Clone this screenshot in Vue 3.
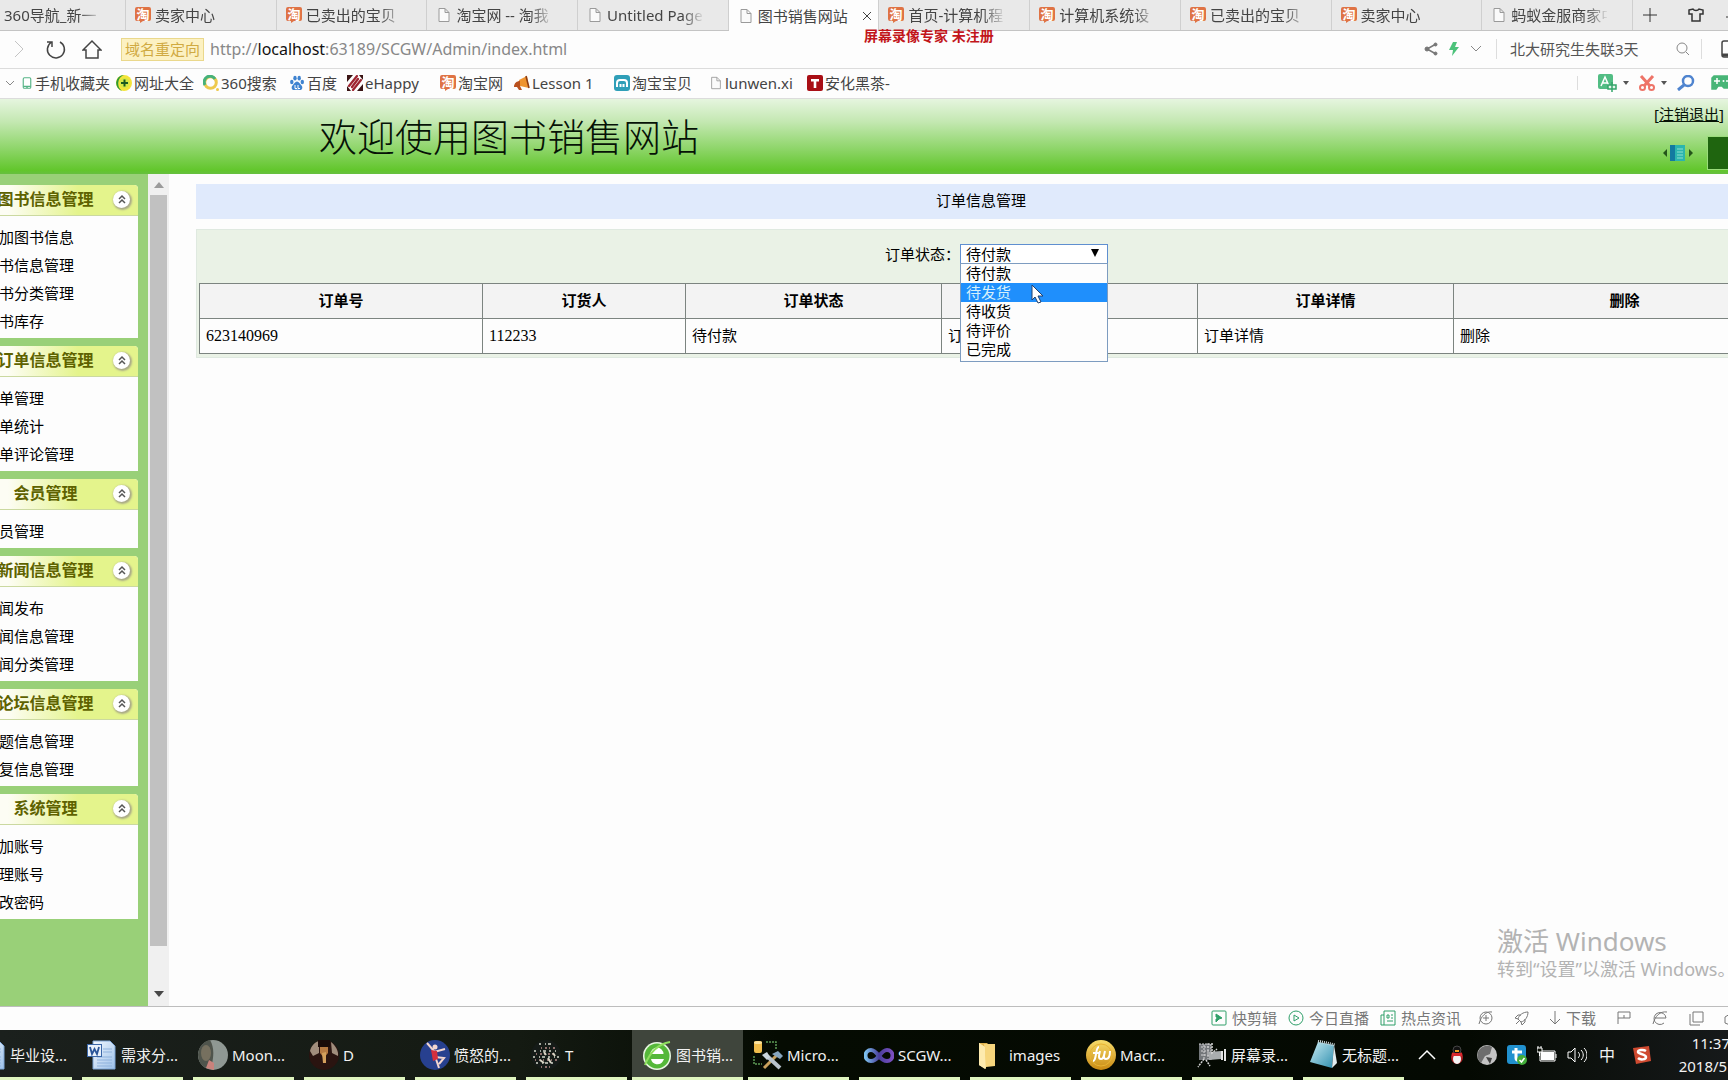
<script setup>
import { ref } from 'vue'

const tabs = [
  { title: '360导航_新一' },
  { title: '卖家中心', icon: 'tao' },
  { title: '已卖出的宝贝', icon: 'tao' },
  { title: '淘宝网 -- 淘我', icon: 'page' },
  { title: 'Untitled Page', icon: 'page' },
  { title: '图书销售网站', icon: 'page', active: true },
  { title: '首页-计算机程', icon: 'tao' },
  { title: '计算机系统设', icon: 'tao' },
  { title: '已卖出的宝贝', icon: 'tao' },
  { title: '卖家中心', icon: 'tao' },
  { title: '蚂蚁金服商家中', icon: 'page' },
]

const bookmarks = [
  { title: '手机收藏夹', icon: 'phone' },
  { title: '网址大全', icon: 'plus360' },
  { title: '360搜索', icon: 'ring' },
  { title: '百度', icon: 'paw' },
  { title: 'eHappy', icon: 'ehappy' },
  { title: '淘宝网', icon: 'tao' },
  { title: 'Lesson 1', icon: 'horn' },
  { title: '淘宝宝贝', icon: 'shell' },
  { title: 'lunwen.xi', icon: 'page' },
  { title: '安化黑茶-', icon: 'tea' },
]

const menu = [
  { title: '图书信息管理', items: ['添加图书信息', '图书信息管理', '图书分类管理', '图书库存'] },
  { title: '订单信息管理', items: ['订单管理', '订单统计', '订单评论管理'] },
  { title: '会员管理', items: ['会员管理'] },
  { title: '新闻信息管理', items: ['新闻发布', '新闻信息管理', '新闻分类管理'] },
  { title: '论坛信息管理', items: ['主题信息管理', '回复信息管理'] },
  { title: '系统管理', items: ['添加账号', '管理账号', '修改密码'] },
]

const states = ['待付款', '待发货', '待收货', '待评价', '已完成']
const state = ref('待付款')
const hovered = ref('待发货')

const tasks = [
  { title: '毕业设...', icon: 'word' },
  { title: '需求分...', icon: 'word' },
  { title: 'Moon...', icon: 'moon' },
  { title: 'D', icon: 'dark' },
  { title: '愤怒的...', icon: 'dancer' },
  { title: 'T', icon: 'noise' },
  { title: '图书销...', icon: 'browser', active: true },
  { title: 'Micro...', icon: 'tools' },
  { title: 'SCGW...', icon: 'vs' },
  { title: 'images', icon: 'folder' },
  { title: 'Macr...', icon: 'macro' },
  { title: '屏幕录...', icon: 'camera' },
  { title: '无标题...', icon: 'notepad' },
]
</script>

<template>
  <div class="screen">
    <svg class="sprite" aria-hidden="true">
      <defs>
        <linearGradient id="gold" x1="0" y1="0" x2="0" y2="1">
          <stop offset="0" stop-color="#f7dc6a" /><stop offset="1" stop-color="#c98a12" />
        </linearGradient>
        <linearGradient id="doc" x1="0" y1="0" x2="1" y2="1">
          <stop offset="0" stop-color="#f4f9ff" /><stop offset="1" stop-color="#9cc0e8" />
        </linearGradient>
        <linearGradient id="note" x1="0" y1="0" x2="1" y2="1">
          <stop offset="0" stop-color="#c9ecf4" /><stop offset="1" stop-color="#2f8fae" />
        </linearGradient>
        <linearGradient id="inf" x1="0" y1="0" x2="1" y2="0">
          <stop offset="0" stop-color="#7cc0ee" /><stop offset="0.5" stop-color="#4a3f9c" /><stop offset="1" stop-color="#7a4fc0" />
        </linearGradient>
        <symbol id="tao" viewBox="0 0 16 16">
          <path d="M2 0h12a2 2 0 0 1 2 2v10a2 2 0 0 1-2 2H8l-3 2v-2H2a2 2 0 0 1-2-2V2a2 2 0 0 1 2-2z" fill="#df7345" />
          <text x="8" y="11.500" font-size="13" font-weight="bold" fill="#fff" text-anchor="middle">淘</text>
        </symbol>
        <symbol id="page" viewBox="0 0 16 16">
          <path d="M3 1.500h6l4 4v9H3zM9 1.500v4h4" fill="#fafafa" stroke="#9a9a9a" />
        </symbol>
        <symbol id="phone" viewBox="0 0 16 16">
          <rect x="3" y="1" width="10" height="14" rx="1.500" fill="#fff" stroke="#55b486" stroke-width="1.500" /><path d="M3 12.500h10M7 14h2" stroke="#55b486" stroke-width="1.500" />
        </symbol>
        <symbol id="plus360" viewBox="0 0 16 16">
          <circle cx="8" cy="8" r="8" fill="#f4e43a" /><path d="M8 0A8 8 0 0 0 6 15.700A9 9 0 0 1 8 0z" fill="#2f9a35" /><circle cx="8.500" cy="8" r="5" fill="#d6e844" /><path d="M8.500 4.500v7M5 8h7" stroke="#1a5a20" stroke-width="2" />
        </symbol>
        <symbol id="ring" viewBox="0 0 16 16">
          <circle cx="7.500" cy="7.500" r="5.800" fill="none" stroke="#eec94c" stroke-width="3" /><path d="M2 10A5.800 5.800 0 0 1 12 4" fill="none" stroke="#46b27a" stroke-width="3" /><circle cx="14.500" cy="14.500" r="1.500" fill="#eec94c" />
        </symbol>
        <symbol id="paw" viewBox="0 0 16 16" fill="#3f83d0">
          <ellipse cx="2.800" cy="7" rx="1.700" ry="2.200" /><ellipse cx="6" cy="3.200" rx="1.700" ry="2.400" /><ellipse cx="10.200" cy="3.200" rx="1.700" ry="2.400" /><ellipse cx="13.300" cy="7" rx="1.700" ry="2.200" /><path d="M8 6.500c2 0 3 2.500 4.500 4s1 5-2 4.500c-2-.3-3-.3-5 0-3 .5-3.500-3-2-4.500S6 6.500 8 6.500z" /><path d="M6 10v3.500h2M9 10v3.500h2" stroke="#fff" fill="none" />
        </symbol>
        <symbol id="ehappy" viewBox="0 0 16 16">
          <path d="M0 0h6L0 7zM16 16h-6l6-7zM0 11v5h4zM16 5V0h-4z" fill="#3a1414" /><path d="M2 11L10 1M14 5L6 15M5 12l6-8" fill="none" stroke="#9e2430" stroke-width="2.200" stroke-linecap="round" />
        </symbol>
        <symbol id="horn" viewBox="0 0 16 16">
          <path d="M5 5l8-4 2 12-9-2z" fill="#ef9430" /><path d="M0 12c0-4 3-6 6-6v5l2 4H5l-2-3z" fill="#b9501d" /><path d="M12 1l3 12" stroke="#8d3c14" stroke-width="1.500" />
        </symbol>
        <symbol id="shell" viewBox="0 0 16 16">
          <rect width="16" height="16" rx="3" fill="#2f9fb8" /><path d="M3 12V8a3 3 0 0 1 3-3h4a3 3 0 0 1 3 3v4M6.500 12V9M9.500 12V9" fill="none" stroke="#fff" stroke-width="2" />
        </symbol>
        <symbol id="tea" viewBox="0 0 16 16">
          <rect width="16" height="16" rx="2" fill="#a90f16" /><path d="M4 4h8v2.500H9.300V13H6.700V6.500H4z" fill="#fff" />
        </symbol>
        <symbol id="word" viewBox="0 0 30 30">
          <path d="M6 1h17l5 5v23H6z" fill="url(#doc)" stroke="#7fa6d6" /><path d="M16 9h9M16 12h9M10 17h15M10 20h15M10 23h15M10 26h15" stroke="#8fb2dd" /><rect x="0.500" y="4.500" width="14" height="12" fill="#e9f1fb" stroke="#3b67a8" /><path d="M3 7l2 7 2.500-5L10 14l2-7" fill="none" stroke="#2a5599" stroke-width="1.800" />
        </symbol>
        <symbol id="moon" viewBox="0 0 30 30">
          <circle cx="15" cy="15" r="15" fill="#8f9893" /><path d="M0 15A15 15 0 0 1 12 0c4 7 4 14 2 24l-6 4A15 15 0 0 1 0 15z" fill="#4f544c" /><ellipse cx="8" cy="13" rx="5" ry="8" fill="#76705f" /><path d="M8 28l3-8 5 3v7z" fill="#c9827c" />
        </symbol>
        <symbol id="dark" viewBox="0 0 30 30">
          <circle cx="15" cy="15" r="15" fill="#2a1410" /><path d="M1 11C2 6 6 2 10 1v12l-6 3zM22 2c4 3 8 9 7 14l-6-3z" fill="#a08d7c" /><path d="M11 7h8v6l-4 5-4-5z" fill="#b67a42" /><path d="M9 0h12v7H9z" fill="#180a08" /><path d="M13 13l4-1v11h-3z" fill="#d3a05c" />
        </symbol>
        <symbol id="dancer" viewBox="0 0 30 30">
          <circle cx="15" cy="15" r="15" fill="#27408f" /><path d="M7 3l7 8 2 8 3 9M14 12l11-3M15 17l9 1-5 6" fill="none" stroke="#f2d5cf" stroke-width="2" /><circle cx="15" cy="7" r="2.500" fill="#f2d5cf" /><path d="M11 10l6 1 1 8-5 2z" fill="#d42f3d" />
        </symbol>
        <symbol id="noise" viewBox="0 0 30 30">
          <circle cx="15" cy="15" r="15" fill="#151b18" />
          <g fill="none" stroke-width="2"><path d="M8 4h14M3 11h24M2 17h26M5 23h20" stroke="#a5a9a0" stroke-dasharray="2 4 1 2 3 3" /><path d="M10 8h14M5 14h20M4 20h22M10 27h12" stroke="#8d6f6c" stroke-dasharray="1 3 2 2" /><path d="M9 20l4 3M17 18l3 5M13 12l2 3M22 13l2 3" stroke="#d8d4c4" /></g>
        </symbol>
        <symbol id="browser" viewBox="0 0 30 30">
          <circle cx="15" cy="16" r="14" fill="#e9f7e2" /><circle cx="15" cy="16" r="12.500" fill="#55b83a" /><path d="M22 19H9a6.500 6.500 0 0 0 12 2M8.500 14a6.500 6.500 0 0 1 13 0z" fill="#fff" /><path d="M12 17h7" stroke="#55b83a" stroke-width="3" /><path d="M3 25C8 12 16 4 28 2" fill="none" stroke="#8ede5e" stroke-width="2" />
        </symbol>
        <symbol id="tools" viewBox="0 0 30 30">
          <rect x="1" y="1" width="8" height="12" rx="2" fill="#f0bd4c" /><ellipse cx="5" cy="2.500" rx="4" ry="1.500" fill="#fbe3a0" /><path d="M13 2h10v8M1 16v8h8" fill="none" stroke="#5d9a55" stroke-width="1.500" stroke-dasharray="2 1" /><path d="M11 28l14-14" stroke="#c9a15c" stroke-width="3" /><path d="M14 16l13 12" stroke="#b9c4cc" stroke-width="4" /><path d="M19 14l6-3 5 5-3 3z" fill="#87a5bd" /><path d="M9 15l5-3 3 5-3 3z" fill="#cbd6de" />
        </symbol>
        <symbol id="vs" viewBox="0 0 30 30">
          <path d="M15 16c-3-4-5-6-8-6a5.500 5.500 0 0 0 0 11c3 0 5-1 8-5s5-6 8-6a5.500 5.500 0 0 1 0 11c-3 0-5-1-8-5z" fill="none" stroke="url(#inf)" stroke-width="4" />
        </symbol>
        <symbol id="folder" viewBox="0 0 30 30">
          <path d="M4 3h8l2 2h6v20H4z" fill="#e0b34f" /><path d="M4 3l7 5v21l-7-4z" fill="#fbe5a0" /><path d="M9 4h11v22l-9 1z" fill="#f6d57c" /><path d="M4 3l6 4v22l-6-4z" fill="#fdeaae" />
        </symbol>
        <symbol id="macro" viewBox="0 0 30 30">
          <circle cx="15" cy="15" r="15" fill="url(#gold)" /><circle cx="15" cy="15" r="11" fill="none" stroke="#e8b433" /><path d="M13 7c-4 0-2 14-6 14M7 13h6M14 11c-1 4-2 8 1 8s3-4 4-8c-1 4-2 8 1 8s4-4 4-8" fill="none" stroke="#fff" stroke-width="2" />
        </symbol>
        <symbol id="camera" viewBox="0 0 30 30">
          <rect x="2" y="4" width="12" height="16" fill="#73777a" /><path d="M2 4h12v16M4 7h8M4 11h8M4 15h8M7 5v14M11 3v16" fill="none" stroke="#d6d6d6" stroke-dasharray="2 1" /><path d="M12 12l12-1v8l-12 1z" fill="#a9adae" /><path d="M25 11v9M28 9v12" stroke="#e4e4e4" stroke-width="2" /><path d="M7 19l-6 8M9 20l4 6M15 3v10l5-4" fill="none" stroke="#d8d8d8" stroke-dasharray="2 1" stroke-width="1.500" />
        </symbol>
        <symbol id="notepad" viewBox="0 0 30 30">
          <path d="M10 2l16 3-2 23-22-6z" fill="url(#note)" /><path d="M26 5l3 18-5 5z" fill="#e3eef0" /><path d="M10 1l17 4" stroke="#d0dcdf" stroke-width="3" stroke-dasharray="1 1" />
        </symbol>
      </defs>
    </svg>

    <!-- browser tabs -->
    <nav class="tabs">
      <button v-for="(t, i) in tabs" :key="i" class="tab" :class="{ active: t.active }">
        <svg v-if="t.icon" class="i16"><use :href="'#' + t.icon" /></svg>
        <span class="tab-title">{{ t.title }}</span>
        <svg v-if="t.active" class="close" viewBox="0 0 10 10"><path d="M1 1l8 8M9 1l-8 8" /></svg>
      </button>
      <div class="tab-tools">
        <svg class="line" width="14" height="14" viewBox="0 0 14 14"><path d="M7 0v14M0 7h14" /></svg>
        <svg class="line shirt" width="16" height="14" viewBox="0 0 16 14"><path d="M1 2l4-1c1 2 5 2 6 0l4 1v4h-3v7H4V6H1z" /></svg>
        <svg class="line" width="14" height="14" viewBox="0 0 14 14"><path d="M0 9h14" /></svg>
      </div>
    </nav>

    <!-- address bar -->
    <div class="address">
      <svg class="line fwd" width="10" height="18" viewBox="0 0 10 18"><path d="M1 1l8 8-8 8" /></svg>
      <svg class="line dark" width="20" height="20" viewBox="0 0 20 20"><path d="M5 3.500a8.500 8.500 0 1 0 9-.5M1 3h5v5" /></svg>
      <svg class="line dark home" width="20" height="20" viewBox="0 0 20 20"><path d="M1 11l9-9 9 9h-3v8H4v-8z" /></svg>
      <span class="redirect">域名重定向</span>
      <span class="url">http://<b>localhost</b>:63189/SCGW/Admin/index.html</span>
      <div class="address-right">
        <svg width="14" height="14" viewBox="0 0 14 14" fill="#777" stroke="#777"><path d="M12 2L3 7l9 5" fill="none" stroke-width="1.500" /><circle cx="3" cy="7" r="2" /><circle cx="11.500" cy="2.500" r="1.500" /><circle cx="11.500" cy="11.500" r="1.500" /></svg>
        <svg width="10" height="14" viewBox="0 0 10 14"><path d="M4 0h4L6 5h4L3 14l1-6H0z" fill="#4cc27a" /></svg>
        <svg class="line grey" width="12" height="8" viewBox="0 0 12 8"><path d="M1 1l5 5 5-5" /></svg>
        <label class="search"><input value="北大研究生失联3天" aria-label="搜索"></label>
        <svg class="line grey" width="14" height="14" viewBox="0 0 14 14"><circle cx="6" cy="6" r="5" /><path d="M10 10l3 3" /></svg>
        <i class="bar"></i>
        <svg class="line dark mobile" width="7" height="18" viewBox="0 0 7 18"><rect x="1" y="1" width="14" height="16" rx="2" /><path d="M1 15h9" stroke-width="3" /></svg>
      </div>
    </div>

    <!-- bookmarks -->
    <nav class="bookmarks">
      <svg class="line grey" width="10" height="6" viewBox="0 0 10 6"><path d="M1 1l4 4 4-4" /></svg>
      <a v-for="b in bookmarks" :key="b.title" href="#"><svg class="i16" :class="b.icon"><use :href="'#' + b.icon" /></svg>{{ b.title }}</a>
      <div class="tools">
        <i class="bar"></i>
        <svg width="19" height="18" viewBox="0 0 19 18"><rect width="15" height="15" rx="2" fill="#52bd84" /><path d="M3 12L7 3l4 9M5 9h5" stroke="#fff" fill="none" stroke-width="1.500" /><path d="M10 11h8v4h-8zM14 8v10" stroke="#35a56b" stroke-width="1.500" fill="#e5f7ec" /></svg>
        <svg class="caret" width="6" height="4" viewBox="0 0 6 4"><path d="M0 0h6L3 4z" fill="#555" /></svg>
        <svg width="16" height="16" viewBox="0 0 16 16" fill="none" stroke="#ee7468" stroke-width="2"><path d="M2 1l9 10M14 1L5 11" stroke-width="3" /><circle cx="3.500" cy="12.500" r="2.500" /><circle cx="12.500" cy="12.500" r="2.500" /></svg>
        <svg class="caret" width="6" height="4" viewBox="0 0 6 4"><path d="M0 0h6L3 4z" fill="#555" /></svg>
        <svg width="18" height="16" viewBox="0 0 18 16" fill="none" stroke="#4f84cf"><circle cx="11" cy="6" r="5" stroke-width="2.500" /><path d="M7 10l-6 5" stroke-width="3" /></svg>
        <svg class="pad" width="17" height="16" viewBox="0 0 17 16"><path d="M3 1h16v12h-6l-2-2H7l-2 3H1V3z" fill="#48b577" stroke="#48b577" stroke-width="1.500" /><path d="M6 3v6M3 6h6" stroke="#fff" stroke-width="1.500" /><circle cx="12.500" cy="6" r="1" fill="#fff" /><circle cx="16" cy="6" r="1" fill="#fff" /></svg>
      </div>
    </nav>

    <header class="banner">
      <h1>欢迎使用图书销售网站</h1>
      <div class="banner-side">
        <span class="logout">[<a href="#">注销退出</a>]</span>
        <div class="banner-row">
          <svg width="30" height="16" viewBox="0 0 30 16"><path d="M4 4v8L0 8zM26 4v8l4-4z" fill="#24551a" /><path d="M7 0h15v16H7z" fill="#2bb5ae" /><path d="M7 0h5v16H7z" fill="#137aa0" /><path d="M14 4h6M14 7h6M14 10h6M14 13h6" stroke="#8fe0ce" /></svg>
          <i class="block"></i>
        </div>
      </div>
    </header>

    <div class="workspace">
      <aside class="sidebar">
        <section v-for="m in menu" :key="m.title" class="group">
          <div class="group-head">
            <h2>{{ m.title }}</h2>
            <button class="fold" aria-label="收起"><svg width="8" height="10" viewBox="0 0 8 10"><path d="M1 5l3-3 3 3M1 9l3-3 3 3" /></svg></button>
          </div>
          <ul><li v-for="it in m.items" :key="it"><a href="#">{{ it }}</a></li></ul>
        </section>
      </aside>
      <div class="scroll">
        <svg width="10" height="6" viewBox="0 0 10 6"><path d="M5 0l5 6H0z" fill="#9b9b9b" /></svg>
        <div class="track"><div class="thumb"></div></div>
        <svg width="10" height="6" viewBox="0 0 10 6"><path d="M5 6l5-6H0z" fill="#484848" /></svg>
      </div>

      <main class="content">
        <div class="sheet">
          <h3>订单信息管理</h3>
          <div class="panel">
            <div class="filter">
              <label for="state">订单状态：</label>
              <div class="picker">
                <select id="state" v-model="state"><option v-for="s in states" :key="s">{{ s }}</option></select>
                <svg class="arrow" width="8" height="8" viewBox="0 0 8 8"><path d="M0 0h8L4 8z" /></svg>
                <ul class="drop">
                  <li v-for="s in states" :key="s" :class="{ on: s === hovered }" @mouseenter="hovered = s">{{ s }}</li>
                </ul>
                <svg class="pointer" width="13" height="20" viewBox="0 0 13 20"><path d="M1 1v15l3-3 3 6 3-1-3-6h5z" fill="#fff" stroke="#24406a" /></svg>
              </div>
            </div>
            <table>
              <colgroup><col class="c-no"><col class="c-user"><col class="c-std"><col class="c-std"><col class="c-std"><col></colgroup>
              <thead><tr><th>订单号</th><th>订货人</th><th>订单状态</th><th></th><th>订单详情</th><th>删除</th></tr></thead>
              <tbody><tr><td>623140969</td><td>112233</td><td>待付款</td><td>订</td><td>订单详情</td><td>删除</td></tr></tbody>
            </table>
          </div>
        </div>
        <div class="activate"><strong>激活 Windows</strong><span>转到“设置”以激活 Windows。</span></div>
      </main>
    </div>

    <!-- browser status bar -->
    <div class="status">
      <a href="#"><svg width="16" height="16" viewBox="0 0 16 16"><rect x="1" y="1" width="14" height="14" rx="1" /><path d="M5 4l6 4-3 1-3 3V9l2-1-2-1z" fill="#2f9f69" /></svg>快剪辑</a>
      <a href="#"><svg width="16" height="16" viewBox="0 0 16 16"><circle cx="8" cy="8" r="7" /><path d="M6 5l5 3-5 3z" /></svg>今日直播</a>
      <a href="#"><svg width="16" height="16" viewBox="0 0 16 16"><path d="M4 1h11v14H1V5h3zM4 5v10M7 5h2v3H7zM11 5h2M11 8h2M7 11h6" /></svg>热点资讯</a>
      <div class="mini">
        <svg viewBox="0 0 16 16"><circle cx="8" cy="8" r="6" /><path d="M1 14C3 6 8 1 14 2M8 5v6M5 8h6" /></svg>
        <svg viewBox="0 0 16 16"><path d="M4 9c1-4 5-7 10-7 0 5-3 9-7 10zM4 9L1 8l3-3h3M7 12l1 3 3-3V9M2 14l3-3" /></svg>
        <a href="#" class="dl"><svg viewBox="0 0 16 16"><path d="M8 1v13M3 9l5 5 5-5" /></svg>下载</a>
        <svg viewBox="0 0 16 16"><path d="M2 14V2h12v6H8V5M2 8h6" /></svg>
        <svg viewBox="0 0 16 16"><path d="M3 8h11a6 6 0 1 0-2 5M1 14C3 6 8 1 15 2" /></svg>
        <svg viewBox="0 0 16 16"><path d="M5 2h10v10H5zM2 4v11h10" /></svg>
        <svg viewBox="0 0 16 16"><path d="M6 4L1 7v6l5 2" /></svg>
      </div>
    </div>

    <!-- taskbar -->
    <footer class="taskbar">
      <div class="tasks">
        <button v-for="(t, i) in tasks" :key="i" class="task" :class="{ active: t.active }">
          <svg class="i30"><use :href="'#' + t.icon" /></svg><span>{{ t.title }}</span>
        </button>
      </div>
      <div class="tray">
        <svg viewBox="0 0 20 20"><path d="M2 14l8-8 8 8" fill="none" stroke="#fff" stroke-width="1.500" /></svg>
        <svg viewBox="0 0 20 20"><ellipse cx="10" cy="12" rx="6" ry="7" fill="#b02024" /><ellipse cx="10" cy="14" rx="4" ry="5" fill="#f4f4f4" /><circle cx="10" cy="5" r="4" fill="#111" stroke="#444" /><path d="M5 8h10v3H5z" fill="#d9282e" /><path d="M8 6h4" stroke="#f0a020" stroke-width="2" /></svg>
        <svg viewBox="0 0 20 20"><circle cx="10" cy="10" r="10" fill="#c4c4c4" /><path d="M2 5a10 10 0 0 1 13-3l-2 7-5 2-4 7A10 10 0 0 1 2 5z" fill="#6d6d6d" /><path d="M9 12l6 1-2 6z" fill="#444" /></svg>
        <svg viewBox="0 0 20 20"><rect width="19" height="19" rx="3" fill="#2191cf" /><path d="M9 3v10c0 3 5 3 6 1M5 7h10" fill="none" stroke="#fff" stroke-width="3" /><circle cx="15" cy="15" r="5" fill="#43ad39" /><path d="M12.500 15l2 2 3-4" fill="none" stroke="#fff" stroke-width="1.500" /></svg>
        <svg viewBox="0 0 20 20"><path d="M4 7h13v8H4z" fill="#fff" /><path d="M3 6h15v10H3zM19 9v4" fill="none" stroke="#fff" /><path d="M0 3h5v4H0zM1 1v2M4 1v2M2.500 7v4" fill="#0a0f06" stroke="#fff" /></svg>
        <svg viewBox="0 0 20 20"><path d="M1 7h3l4-4v14l-4-4H1zM11 7c2 2 2 4 0 6M14 5c3 3 3 7 0 10M17 3c4 4 4 10 0 14" fill="none" stroke="#fff" /></svg>
        <span class="ime">中</span>
        <svg viewBox="0 0 20 20"><path d="M1 3l16-2 2 15-15 3z" fill="#cf4a30" /><path d="M14 6c-3-2-8-1-8 1s8 2 8 5-6 3-8 1" fill="none" stroke="#fff" stroke-width="2.500" /></svg>
      </div>
      <div class="clock"><time class="time">11:37</time><time>2018/5</time></div>
    </footer>

    <div class="recorder">屏幕录像专家  未注册</div>
  </div>
</template>

<style>
body { margin: 0; overflow: hidden; }
</style>

<style scoped>
.screen { position: relative; display: flex; flex-direction: column; height: 100vh; overflow: hidden; background: #fdfdfd; color: #444; font: 15px/20px "Noto Sans", "Noto Sans CJK SC", sans-serif; white-space: nowrap; }
.sprite { position: absolute; width: 0; height: 0; }
button { border: 0; padding: 0; background: none; font: inherit; color: inherit; }
a { color: inherit; text-decoration: none; }
ul { margin: 0; padding: 0; list-style: none; }
svg { flex: none; display: block; }
.i16 { width: 16px; height: 16px; }
.i30 { width: 30px; height: 30px; }
.line { fill: none; stroke: #333; }
.line.dark { stroke: #444; stroke-width: 1.5; }
.line.grey { stroke: #888; }
.bar { width: 1px; height: 20px; background: #ddd; }

.tabs { display: grid; grid-template-columns: 126px repeat(10, 1fr) 95px; height: 30px; background: #e9e9e9; border-bottom: 1px solid #c4c4c4; }
.tab { display: flex; align-items: center; gap: 4px; min-width: 0; padding: 0 6px 0 9px; border-right: 1px solid #cfcfcf; }
.tab:first-child { padding-left: 4px; }
.tab.active { background: #fdfdfd; margin-bottom: -1px; }
.tab-title { width: 96px; overflow: hidden; text-align: left; mask-image: linear-gradient(90deg, #000 75px, transparent 98px); }
.tab.active .tab-title { mask-image: none; }
.close { width: 10px; height: 10px; margin-left: 4px; stroke: #444; }
.tab-tools { display: flex; align-items: center; overflow: hidden; padding-left: 10px; }
.shirt { margin: 0 22px 0 31px; stroke-width: 1.5; }

.address { display: flex; align-items: center; height: 36px; border-bottom: 1px solid #dcdcdc; padding: 0 0 1px 14px; }
.fwd { margin-right: 22px; stroke: #c4c4c4; }
.home { margin-left: 16px; }
.redirect { margin: 0 6px 0 19px; padding: 0 3px; border: 1px solid #ead88c; background: #fcf1c2; color: #d0aa42; line-height: 21px; }
.url { font-size: 16px; color: #888; }
.url b { font-weight: 400; color: #111; }
.address-right { display: flex; align-items: center; margin-left: auto; gap: 11px; }
.search { display: flex; margin-left: 3px; border-left: 1px solid #ddd; padding-left: 13px; }
.search input { width: 155px; padding: 0; border: 0; background: none; font: inherit; color: #555; outline: 0; }
.mobile { margin-left: 8px; }

.bookmarks { display: grid; grid-template-columns: 16px 95px 87px 86px 58px 93px 74px 100px 95px 98px 100px 1fr; align-items: center; height: 27px; padding: 0 0 2px 5px; border-bottom: 1px solid #dcdcdc; }
.bookmarks a { display: flex; align-items: center; gap: 2px; }
.bookmarks .phone { width: 12px; }
.bookmarks .page { width: 14px; }
.tools { display: flex; align-items: center; justify-content: flex-end; }
.tools .bar { height: 14px; margin-right: 20px; }
.caret { margin: 0 10px 0 6px; }
.pad { margin-left: 16px; }

.banner { display: flex; justify-content: space-between; height: 75px; padding-left: 319px; background: linear-gradient(#e6f5df, #c4e8b2 30%, #90d66c 65%, #62c62c 95%, #66bf40); color: #061206; }
.banner h1 { margin: 0; font-weight: 300; font-size: 38px; line-height: 74px; }
.banner-side { display: flex; flex-direction: column; align-items: flex-end; justify-content: space-between; padding: 5px 0 4px; }
.logout { padding-right: 4px; }
.logout a { text-decoration: underline; }
.banner-row { display: flex; align-items: center; gap: 14px; }
.block { width: 20px; height: 32px; border: 1px solid #9bdc7c; border-right: 0; background: #1f650f; }

.workspace { flex: 1; display: flex; min-height: 0; color: #000; }
.sidebar { width: 148px; overflow: hidden; padding-top: 11px; box-sizing: border-box; background: #99d078; }
.group { width: 160px; margin: 0 0 8px -22px; background: #fdfdfd; border-radius: 0 4px 0 0; overflow: hidden; }
.group-head { display: flex; align-items: center; box-sizing: border-box; height: 31px; padding-bottom: 2px; border-bottom: 1px solid #cbd9a0; background: linear-gradient(90deg, #fdfdf4 30px, #e4f48c 100px); }
.group-head h2 { flex: 1; margin: 0; font-size: 16px; text-align: center; color: #5e6200; }
.fold { display: flex; align-items: center; justify-content: center; width: 17px; height: 17px; margin-right: 8px; border-radius: 50%; background: #fff; box-shadow: 1px 1px 2px 1px #a8a888; }
.fold svg { fill: none; stroke: #555; stroke-width: 1.5; }
.group ul { padding: 7px 0 3px 6px; }
.group li { line-height: 28px; }
.scroll { width: 21px; display: flex; flex-direction: column; align-items: center; box-sizing: border-box; padding: 8px 0 9px; background: #f0f0f0; }
.track { flex: 1; width: 17px; padding: 7px 0 45px; display: flex; }
.thumb { flex: 1; background: #c1c1c1; }

.content { position: relative; flex: 1; min-width: 0; overflow: hidden; padding: 10px 0 0 27px; }
.sheet { margin-right: -71px; }
.sheet h3 { margin: 0 0 10px; padding: 0 33px 2px 0; background: #e0eafc; font-weight: 400; font-size: 15px; line-height: 33px; text-align: center; }
.panel { padding: 0 2px 3px; border: 1px solid #dfe9e0; background: #eaf2e6; }
.filter { display: flex; justify-content: center; align-items: center; box-sizing: border-box; height: 53px; padding: 0 2px 6px 0; }
.picker { position: relative; width: 148px; }
.picker select { display: block; width: 100%; height: 20px; padding: 0 5px; border: 1px solid #5f8fd0; background: #fff; appearance: none; font: inherit; line-height: 18px; color: #000; border-radius: 0; outline: 0; }
.arrow { position: absolute; right: 9px; top: 5px; }
.drop { position: absolute; left: 0; right: 0; top: 19px; z-index: 2; border: 1px solid #7d9cc0; background: #fdfdfd; padding-bottom: 2px; }
.drop li { padding-left: 5px; line-height: 19px; }
.drop .on { background: #1f8ffc; color: #d6f0fb; }
.pointer { position: absolute; left: 71px; top: 40px; z-index: 3; }
table { width: 100%; table-layout: fixed; border-collapse: collapse; background: #fdfdfd; }
.c-no { width: 283px; }
.c-user { width: 203px; }
.c-std { width: 256px; }
th, td { box-sizing: border-box; height: 35px; padding: 0 6px; border: 1px solid #7c8480; }
th { padding-bottom: 2px; background: #f3f3f3; }
td { text-align: left; font-family: "Liberation Serif", "Noto Sans CJK SC", serif; }
td:nth-child(-n+2) { font-size: 16px; }
.activate { position: absolute; left: calc(100% - 231px); bottom: 25px; display: flex; flex-direction: column; color: #b3b3b3; font-size: 18px; line-height: 24px; }
.activate strong { font-weight: 400; font-size: 26px; line-height: 32px; }

.status { display: flex; align-items: center; justify-content: flex-end; gap: 11px; box-sizing: border-box; height: 24px; padding-bottom: 1px; border-top: 1px solid #bdbdbd; color: #777; overflow: hidden; }
.status a { display: flex; align-items: center; gap: 5px; }
.status svg { fill: none; stroke: #2f9f69; }
.mini { display: flex; align-items: center; gap: 20px; padding-left: 6px; margin-right: -12px; }
.mini svg { width: 16px; height: 16px; stroke: #777; }
.mini .dl { gap: 3px; margin-left: -3px; }

.taskbar { display: flex; height: 50px; background: linear-gradient(90deg, #1b201d, #141a12 30%, #050b02 45%, #040902 85%, #16191a); color: #f2f2f2; }
.tasks { display: grid; grid-template-columns: repeat(13, 111px); margin-left: -34px; }
.task { display: flex; align-items: center; gap: 4px; margin: 0 5px; padding: 2px 0 0 5px; border-bottom: 3px solid #dff5bf; }
.task.active { margin: 0; padding-left: 10px; background: #3f453c; }
.tray { display: flex; align-items: center; gap: 10px; padding-left: 8px; }
.tray svg { width: 20px; height: 20px; }
.ime { width: 20px; font-size: 16px; text-align: center; }
.tray .ime + svg { margin-left: 5px; }
.clock { display: flex; flex-direction: column; justify-content: center; margin: 0 -2px 0 auto; line-height: 23px; }
.time { padding-left: 13px; }

.recorder { position: absolute; left: 864px; top: 26px; color: #c2161b; font-size: 14px; font-weight: 700; white-space: pre; }
</style>
